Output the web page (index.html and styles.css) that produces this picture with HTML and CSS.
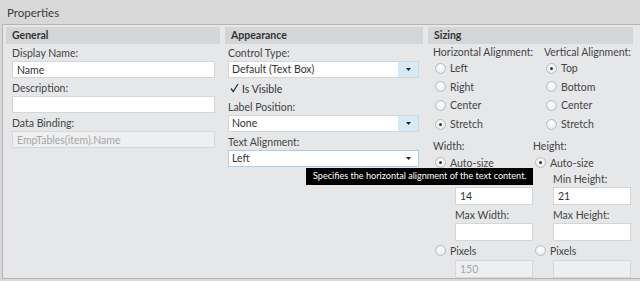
FILE: index.html
```html
<!DOCTYPE html>
<html lang="en">
<head>
  <meta charset="UTF-8" />
  <title>Properties</title>
  <link rel="stylesheet" href="styles.css">
</head>
<body>

  <div class="titlebar">Properties</div>

  <div class="panel">

    <section class="group general">
      <h2 class="group-head">General</h2>
      <div class="group-body">
        <label class="field-label" for="displayName">Display Name:</label>
        <input class="text-input" id="displayName" value="Name" />
        <label class="field-label" for="description">Description:</label>
        <input class="text-input" id="description" value="" />
        <label class="field-label" for="dataBinding">Data Binding:</label>
        <input class="text-input disabled" id="dataBinding" value="EmpTables(item).Name" disabled />
      </div>
    </section>

    <section class="group appearance">
      <h2 class="group-head">Appearance</h2>
      <div class="group-body">
        <div class="field-label">Control Type:</div>
        <div class="select-box">
          <span class="select-value">Default (Text Box)</span>
          <span class="select-btn"><svg width="5" height="3" viewBox="0 0 5 3"><path d="M0 0h5L2.5 3z" fill="#222"/></svg></span>
        </div>
        <div class="check-row">
          <svg class="check-mark" width="9" height="10" viewBox="0 0 9 10"><path d="M1 5.5l2.2 3L8 1" fill="none" stroke="#333" stroke-width="1.3"/></svg>
          <span>Is Visible</span>
        </div>
        <div class="field-label spaced">Label Position:</div>
        <div class="select-box">
          <span class="select-value">None</span>
          <span class="select-btn"><svg width="5" height="3" viewBox="0 0 5 3"><path d="M0 0h5L2.5 3z" fill="#222"/></svg></span>
        </div>
        <div class="field-label">Text Alignment:</div>
        <div class="select-box focused">
          <span class="select-value">Left</span>
          <span class="select-btn plain"><svg width="5" height="3" viewBox="0 0 5 3"><path d="M0 0h5L2.5 3z" fill="#222"/></svg></span>
        </div>
      </div>
    </section>

    <section class="group sizing">
      <h2 class="group-head">Sizing</h2>
      <div class="group-body">
        <div class="align-grid">
          <div class="radio-col">
            <div class="col-label">Horizontal Alignment:</div>
            <div class="radio-row"><span class="radio"></span>Left</div>
            <div class="radio-row"><span class="radio"></span>Right</div>
            <div class="radio-row"><span class="radio"></span>Center</div>
            <div class="radio-row"><span class="radio checked"></span>Stretch</div>
          </div>
          <div class="radio-col">
            <div class="col-label">Vertical Alignment:</div>
            <div class="radio-row"><span class="radio checked"></span>Top</div>
            <div class="radio-row"><span class="radio"></span>Bottom</div>
            <div class="radio-row"><span class="radio"></span>Center</div>
            <div class="radio-row"><span class="radio"></span>Stretch</div>
          </div>
        </div>

        <div class="size-grid">
          <div class="size-col">
            <div class="col-label">Width:</div>
            <div class="radio-row"><span class="radio checked"></span>Auto-size</div>
            <div class="sub">
              <div class="field-label">Min Width:</div>
              <input class="text-input small" value="14" />
              <div class="field-label">Max Width:</div>
              <input class="text-input small" value="" />
            </div>
            <div class="radio-row"><span class="radio"></span>Pixels</div>
            <div class="sub">
              <input class="text-input small disabled" value="150" disabled />
            </div>
          </div>
          <div class="size-col">
            <div class="col-label">Height:</div>
            <div class="radio-row"><span class="radio checked"></span>Auto-size</div>
            <div class="sub">
              <div class="field-label">Min Height:</div>
              <input class="text-input small" value="21" />
              <div class="field-label">Max Height:</div>
              <input class="text-input small" value="" />
            </div>
            <div class="radio-row"><span class="radio"></span>Pixels</div>
            <div class="sub">
              <input class="text-input small disabled" value="" disabled />
            </div>
          </div>
        </div>
      </div>
    </section>

    <div class="tooltip">Specifies the horizontal alignment of the text content.</div>
  </div>

</body>
</html>
```

FILE: styles.css
```css
/* Reset */
* {
  box-sizing: border-box;
  margin: 0;
  padding: 0;
}
body {
  font-family: Lato, 'Open Sans', sans-serif;
  font-size: 10.5px;
  color: #444;
  background: #d8d8d8;
  width: 640px;
  height: 281px;
  overflow: hidden;
}

.titlebar {
  height: 24px;
  line-height: 26px;
  padding-left: 7px;
  font-size: 11.5px;
  color: #3d3d3d;
  background: #d8d8d8;
}

.panel {
  position: relative;
  margin-left: 2px;
  height: 255px;
  overflow: hidden;
  background: #e6e7e9;
  border: 1px solid #b4b4b4;
  border-right: none;
  padding: 2px 0 0 3px;
  display: grid;
  grid-template-columns: 214px 198px 205px;
  column-gap: 5px;
  align-items: start;
}

.group-head {
  height: 17px;
  line-height: 17px;
  padding-left: 6px;
  font-size: 10.5px;
  font-weight: 700;
  color: #333;
  background: #d4d5d7;
}
.group-body {
  display: flex;
  flex-direction: column;
  padding: 2px 5px 0 6px;
}
.appearance .group-body {
  padding-left: 3px;
  padding-right: 4px;
}

.field-label {
  line-height: 14px;
  margin-bottom: 1px;
  color: #444;
  white-space: nowrap;
}
.group-body .text-input + .field-label,
.select-box + .field-label {
  margin-top: 3px;
}
.field-label.spaced {
  margin-top: 2px;
}

.text-input {
  display: block;
  width: 100%;
  height: 17px;
  padding: 0 4px;
  font-family: inherit;
  font-size: 10.5px;
  color: #333;
  background: #fff;
  border: 1px solid #d5d6d8;
  outline: none;
}
.text-input.disabled {
  background: #eeeff0;
  color: #a6a6a6;
  border-color: #d8d9db;
}

.select-box {
  display: flex;
  height: 17px;
  background: #fff;
  border: 1px solid #d5d6d8;
}
.select-box.focused {
  border-color: #a9cfe6;
}
.select-value {
  flex: 1;
  line-height: 15px;
  padding-left: 3px;
  color: #333;
}
.select-btn {
  width: 20px;
  display: flex;
  align-items: center;
  justify-content: center;
  background: #d6eaf6;
}
.select-btn.plain {
  background: #fff;
}

.check-row {
  display: flex;
  align-items: center;
  gap: 3px;
  height: 18px;
  margin-top: 2px;
  padding-left: 2px;
  color: #333;
}
.check-mark {
  margin-top: -2px;
}

/* Sizing */
.sizing .group-body {
  padding-left: 5px;
  padding-right: 2px;
}
.align-grid {
  display: grid;
  grid-template-columns: 111px 1fr;
}
.size-grid {
  display: grid;
  grid-template-columns: 100px 1fr;
  margin-top: 7px;
}
.col-label {
  line-height: 13px;
  color: #444;
  white-space: nowrap;
}
.radio-row {
  display: flex;
  align-items: center;
  gap: 4px;
  height: 18.6px;
  padding-left: 2px;
  color: #444;
}
.size-col .radio-row {
  height: 19px;
}
.radio {
  width: 11px;
  height: 11px;
  border-radius: 50%;
  border: 1px solid #b9bbbe;
  background: radial-gradient(circle at 50% 35%, #ffffff 0%, #eceded 70%, #dcdddf 100%);
  position: relative;
}
.radio.checked::after {
  content: "";
  position: absolute;
  left: 3px;
  top: 3px;
  width: 3px;
  height: 3px;
  border-radius: 50%;
  background: #333;
}
.sub {
  padding-left: 22px;
  display: flex;
  flex-direction: column;
}
.size-col + .size-col .sub {
  padding-left: 20px;
}
.sub .text-input + .field-label {
  margin-top: 3px;
}
.text-input.small {
  width: 78px;
  height: 18px;
}

.tooltip {
  position: absolute;
  left: 303px;
  top: 143px;
  width: 227px;
  height: 17px;
  line-height: 16px;
  padding-left: 7px;
  font-size: 9.1px;
  color: #fff;
  background: #000;
  white-space: nowrap;
  overflow: hidden;
}
```
